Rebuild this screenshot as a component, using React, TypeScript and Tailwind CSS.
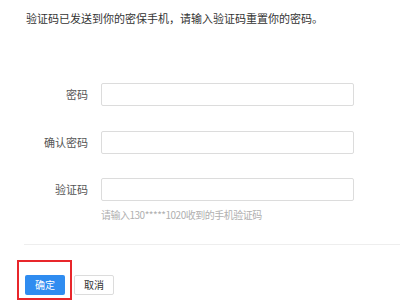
export default function App() {
  const fields = [
    { label: "密码", type: "password" },
    { label: "确认密码", type: "password" },
    { label: "验证码", type: "text" },
  ];

  return (
    <div
      className="w-[406px] h-[302px] bg-white overflow-hidden pt-[10px]"
      style={{ fontFamily: '"Microsoft YaHei", "Noto Sans CJK SC", sans-serif' }}
    >
      {/* Notice */}
      <p className="pl-[26px] text-[11px] leading-[16px] text-[#333]">
        验证码已发送到你的密保手机，请输入验证码重置你的密码。
      </p>

      {/* Form */}
      <div className="mt-[57px]">
        {fields.map((field, index) => (
          <div key={index} className={index === 0 ? "" : index === 1 ? "mt-[25px]" : "mt-[24px]"}>
            <div className="flex items-center h-[23px]">
              <label className="w-[89px] pr-px text-right text-[11px] text-[#555]">{field.label}</label>
              <input
                type={field.type}
                className="ml-[12px] w-[253px] h-[23px] border border-[#dcdcdc] rounded-[2px] outline-none"
              />
            </div>
          </div>
        ))}
        <p className="ml-[101px] mt-[7px] text-[10px] leading-[14px] tracking-[-0.5px] text-[#b0b0b0]">
          请输入130*****1020收到的手机验证码
        </p>
      </div>

      {/* Divider */}
      <div className="ml-[24px] w-[376px] mt-[22px] border-t border-[#eeeeee]"></div>

      {/* Actions */}
      <div className="flex items-end ml-[17px] mt-[15px]">
        <div className="border-2 border-[#e8262b] pl-[6px] pr-[5px] pt-[8px] pb-[3px]">
          <button className="w-[40px] h-[20px] rounded-[2px] bg-[#2f8cf0] text-white text-[10px] leading-[20px]">
            确定
          </button>
        </div>
        <button className="ml-[2px] mb-[5px] w-[40px] h-[20px] rounded-[2px] border border-[#dcdcdc] bg-white text-[#333] text-[10px] leading-[18px]">
          取消
        </button>
      </div>
    </div>
  );
}
